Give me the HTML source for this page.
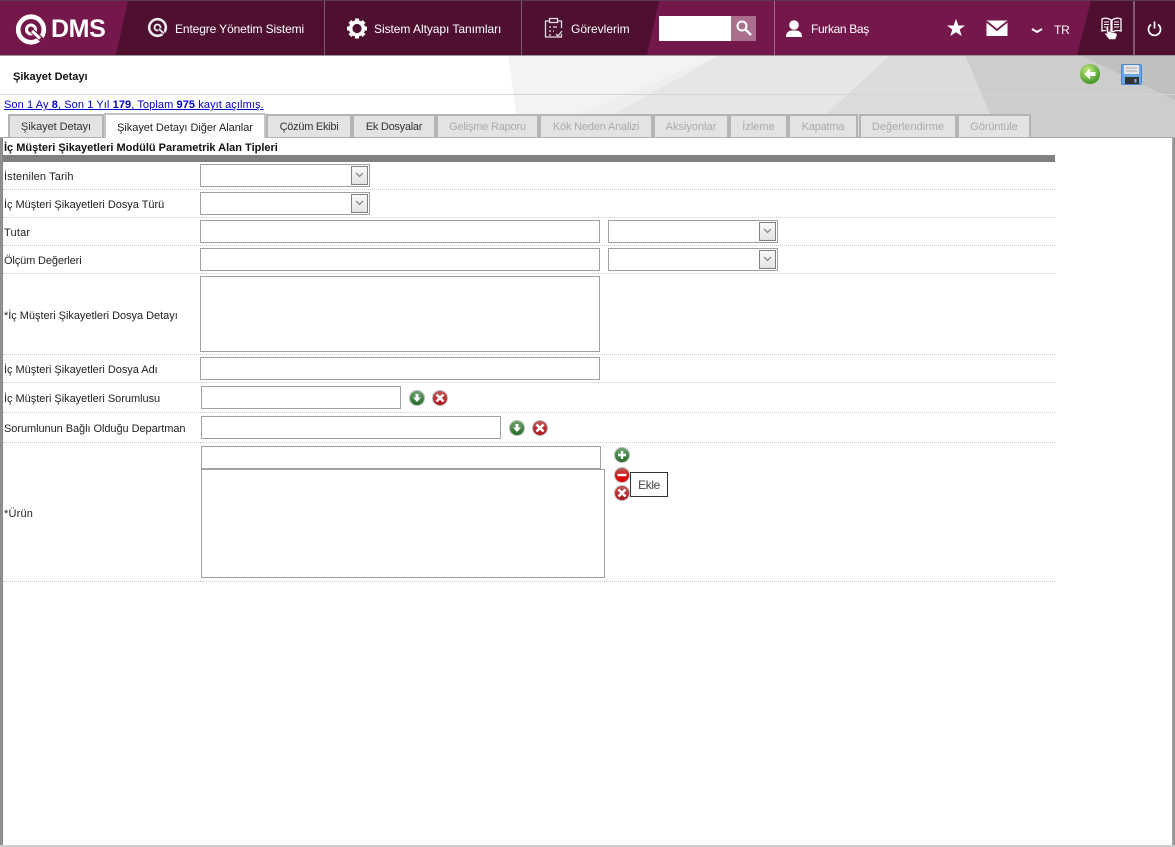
<!DOCTYPE html>
<html lang="tr"><head><meta charset="utf-8"><title>Şikayet Detayı</title>
<style>
html,body{margin:0;padding:0;background:#fff;}
body{width:1175px;height:847px;overflow:hidden;position:relative;font-family:"Liberation Sans",sans-serif;font-size:11px;color:#222;}
.a{position:absolute;}
.t{position:absolute;white-space:nowrap;line-height:14px;}
.h{color:#fff;font-size:12px;white-space:nowrap;position:absolute;line-height:16px;}
.tab{position:absolute;top:114px;height:21px;border:2px solid #b4b4b4;border-bottom:1px solid #b4b4b4;background:#e3e3e3;text-align:center;line-height:23px;color:#aaa;box-sizing:content-box;white-space:nowrap;font-size:11px;}
.tab.on{color:#333;}
.tab.act{background:#fff;color:#222;top:113px;height:24px;border-bottom:0;border-color:#c4c4c4;line-height:26px;}
.in{position:absolute;box-sizing:border-box;border:1px solid #a0a0a0;background:#fff;}
.dot{position:absolute;left:3px;width:1052px;height:0;border-top:1px dotted #ccc;}
.arrow{position:absolute;box-sizing:border-box;top:1px;right:1px;width:17px;height:19px;border:1px solid #808080;background:linear-gradient(#fafafa,#e2e2e2);}
.arrow svg{display:block;margin:5px 0 0 3px;}
</style></head><body>

<!-- page background -->
<svg class="a" style="left:0;top:55px" width="1175" height="83" viewBox="0 0 1175 83">
<rect width="1175" height="83" fill="#fff"/>
<polygon points="508,0 720,0 520,83" fill="#f3f3f3"/>
<polygon points="720,0 570,83 520,83" fill="#eeeeee"/>
<polygon points="720,0 890,0 800,83 570,83" fill="#e6e6e6"/>
<polygon points="890,0 965,0 1000,83 800,83" fill="#dcdcdc"/>
<polygon points="965,0 1175,0 1175,83 1000,83" fill="#cdcdcd"/>
<polygon points="1080,0 1175,45 1175,0" fill="#c0c0c0"/>
<rect y="39" width="1175" height="1" fill="#d4d4d4"/>
<rect y="0" width="1175" height="1" fill="#aaa"/>
<rect y="82" width="1175" height="1" fill="#aaa"/>
</svg>

<!-- header -->
<div class="a" style="left:0;top:0;width:1175px;height:55px;background:#74174a;"></div>
<div class="a" style="left:0;top:0;width:1175px;height:1px;background:#5a3a4c;"></div>
<svg class="a" style="left:0;top:0" width="1175" height="56" viewBox="0 0 1175 56">
<polygon points="128,1 659,1 647,55 116,55" fill="#4e0f31"/>
<polygon points="1091,1 1175,1 1175,55 1077,55" fill="#4e0f31"/>
<rect x="324" y="1" width="1" height="54" fill="#7d5a6d"/>
<rect x="521" y="1" width="1" height="54" fill="#7d5a6d"/>
<rect x="774" y="1" width="1" height="54" fill="#a06a88"/>
<rect x="1133" y="1" width="2" height="54" fill="#7d5a6d"/>
<rect y="55" width="1175" height="1" fill="#999"/>
<!-- logo Q -->
<circle cx="31" cy="29.500" r="12.800" fill="none" stroke="#fff" stroke-width="4.600"/>
<circle cx="31" cy="29.500" r="4.500" fill="none" stroke="#fff" stroke-width="3"/>
<path d="M32 31L42 40" stroke="#74174a" stroke-width="5" fill="none"/>
<path d="M32 31L40 38.500" stroke="#fff" stroke-width="3" fill="none"/>
<!-- Q icon nav -->
<circle cx="157.500" cy="27.500" r="8.300" fill="none" stroke="#eee" stroke-width="2.600"/>
<circle cx="157.500" cy="27.500" r="3" fill="none" stroke="#eee" stroke-width="1.800"/>
<path d="M159 29L165 34.500" stroke="#4e0f31" stroke-width="3" fill="none"/>
<path d="M159 29L164 33.500" stroke="#eee" stroke-width="1.800" fill="none"/>
<!-- gear -->
<g transform="translate(357,28.500)" fill="#fff">
<circle r="6.400" fill="none" stroke="#fff" stroke-width="3.600"/>
<rect x="-2" y="-10" width="4" height="4"/><rect x="-2" y="-10" width="4" height="4" transform="rotate(45)"/><rect x="-2" y="-10" width="4" height="4" transform="rotate(90)"/><rect x="-2" y="-10" width="4" height="4" transform="rotate(135)"/><rect x="-2" y="-10" width="4" height="4" transform="rotate(180)"/><rect x="-2" y="-10" width="4" height="4" transform="rotate(225)"/><rect x="-2" y="-10" width="4" height="4" transform="rotate(270)"/><rect x="-2" y="-10" width="4" height="4" transform="rotate(315)"/>
</g>
<!-- clipboard -->
<g fill="none" stroke="#ddd" stroke-width="1.300">
<path d="M550 21h-4.500v16h16v-3"/><path d="M557 21h4.500v7"/><rect x="549.500" y="18.500" width="8" height="4"/>
<path d="M549 27h2M549 31h2M549 35h2M553 27h4M553 31h1"/><path d="M556 34l2 2 4-5"/>
</g>
<!-- user -->
<g fill="#fff"><circle cx="794" cy="25" r="4.800"/><path d="M786 37c0-5 3-6 5-6.500h6c2 .5 5 1.500 5 6.500z"/></g>
<!-- star -->
<polygon points="956,19 958.400,25.500 965,25.500 959.700,29.500 961.700,36 956,32.200 950.300,36 952.300,29.500 947,25.500 953.600,25.500" fill="#fff"/>
<!-- mail -->
<rect x="986.500" y="20.500" width="21" height="15.500" fill="#fff"/>
<path d="M986.500 21.500L997 30L1007.500 21.500" fill="none" stroke="#74174a" stroke-width="1.800"/>
<!-- chevron -->
<path d="M1032 29l5 3 5-3" fill="none" stroke="#fff" stroke-width="2"/>
<!-- book + hand -->
<g fill="none" stroke="#fff" stroke-width="1.300">
<path d="M1102 19c3-1.500 6-1 9 1v12c-3-1.500-6-2-9-1z"/><path d="M1121 19c-3-1.500-6-1-9 1v12c3-1.500 6-2 9-1z"/>
<path d="M1104 22h5M1104 24.500h5M1104 27h5M1114 22h5M1114 24.500h5M1114 27h5" stroke-width="1"/>
</g>
<path d="M1106 27.500c0-2 2.500-2 2.500 0v4l5.500 1c2.500.5 3.500 1.500 3 3l-1.500 4h-6.500l-4.500-6c1-1 2-.5 2.500 0z" fill="#fff" stroke="#4e0f31" stroke-width=".6"/>
<!-- power -->
<path d="M1151 24.500a6 6 0 1 0 7 0" fill="none" stroke="#fff" stroke-width="1.700"/>
<path d="M1154.500 21.500v7" stroke="#fff" stroke-width="1.700"/>
</svg>
<div class="a" style="left:51px;top:13px;font:bold 25px/32px 'Liberation Sans',sans-serif;color:#fff;letter-spacing:-.4px;">DMS</div>
<div class="h" style="left:175px;top:21px;letter-spacing:-.12px;">Entegre Yönetim Sistemi</div>
<div class="h" style="left:374px;top:21px;letter-spacing:-.05px;">Sistem Altyapı Tanımları</div>
<div class="h" style="left:571px;top:21px;">Görevlerim</div>
<div class="a" style="left:659px;top:16px;width:72px;height:25px;background:#fff;"></div>
<div class="a" style="left:731px;top:16px;width:25px;height:25px;background:#a96f8d;"></div>
<svg class="a" style="left:731px;top:16px" width="25" height="25"><circle cx="11" cy="10" r="4.500" fill="none" stroke="#fff" stroke-width="2"/><path d="M14.500 13.500L20 19" stroke="#fff" stroke-width="2.400"/></svg>
<div class="h" style="left:811px;top:21px;letter-spacing:-.35px;">Furkan Baş</div>
<div class="h" style="left:1054px;top:22px;letter-spacing:-.2px;">TR</div>

<!-- title -->
<div class="t" style="left:13px;top:70px;font-weight:bold;color:#111;font-size:11px;">Şikayet Detayı</div>
<div class="t" style="left:4px;top:98px;color:#00c;text-decoration:underline;font-size:11px;letter-spacing:.09px;">Son 1 Ay <b>8</b>, Son 1 Yıl <b>179</b>, Toplam <b>975</b> kayıt açılmış.</div>

<!-- back icon -->
<svg class="a" style="left:1079px;top:63px" width="22" height="22" viewBox="0 0 22 22">
<defs><radialGradient id="gr" cx=".4" cy=".3" r=".8"><stop offset="0" stop-color="#c4ea7c"/><stop offset="1" stop-color="#2f8a1c"/></radialGradient></defs>
<circle cx="11" cy="11" r="10" fill="url(#gr)"/><path d="M11 5.500L5.500 11L11 16.500v-3.500h5.500V9H11z" fill="#fff"/></svg>
<!-- save icon -->
<svg class="a" style="left:1121px;top:64px" width="21" height="21" viewBox="0 0 21 21">
<rect x=".5" y=".5" width="20" height="20" rx="1.500" fill="#6aa6ea" stroke="#4b86cc"/>
<rect x="3" y="1" width="15" height="9" fill="#e6e6e6"/><path d="M5 4h11M5 7h11" stroke="#aaa"/>
<rect x="4" y="13" width="14" height="7" fill="#333"/><rect x="13.500" y="15" width="2" height="3.500" fill="#7fb2ea"/></svg>

<!-- tabs -->
<div class="tab on" style="left:8px;width:92px;letter-spacing:-.07px;">Şikayet Detayı</div>
<div class="tab on" style="left:266px;width:82px;letter-spacing:-.27px;">Çözüm Ekibi</div>
<div class="tab on" style="left:352px;width:80px;letter-spacing:-.27px;">Ek Dosyalar</div>
<div class="tab" style="left:436px;width:99px;letter-spacing:-.2px;">Gelişme Raporu</div>
<div class="tab" style="left:539px;width:110px;letter-spacing:-.18px;">Kök Neden Analizi</div>
<div class="tab" style="left:653px;width:72px;">Aksiyonlar</div>
<div class="tab" style="left:729px;width:55px;">İzleme</div>
<div class="tab" style="left:788px;width:66px;letter-spacing:-.2px;">Kapatma</div>
<div class="tab" style="left:859px;width:94px;">Değerlendirme</div>
<div class="tab" style="left:957px;width:70px;letter-spacing:-.1px;">Görüntüle</div>
<div class="tab act" style="left:104px;width:158px;letter-spacing:-.04px;">Şikayet Detayı Diğer Alanlar</div>

<!-- content bg and frame -->
<div class="a" style="left:0;top:138px;width:1175px;height:707px;background:#fff;"></div>
<div class="a" style="left:0;top:138px;width:3px;height:707px;background:linear-gradient(90deg,#888,#999 60%,#777);"></div>
<div class="a" style="left:1172px;top:138px;width:3px;height:707px;background:linear-gradient(90deg,#aaa,#888);"></div>
<div class="a" style="left:0;top:845px;width:1175px;height:2px;background:#ccc;"></div>

<div class="t" style="left:4px;top:141px;font-weight:bold;color:#111;font-size:11px;">İç Müşteri Şikayetleri Modülü Parametrik Alan Tipleri</div>
<div class="a" style="left:3px;top:155px;width:1052px;height:7px;background:#808080;"></div>

<!-- labels -->
<div class="t" style="left:4px;top:170px;letter-spacing:.13px;">İstenilen Tarih</div>
<div class="t" style="left:4px;top:198px;letter-spacing:-.03px;">İç Müşteri Şikayetleri Dosya Türü</div>
<div class="t" style="left:4px;top:226px;letter-spacing:.2px;">Tutar</div>
<div class="t" style="left:4px;top:254px;letter-spacing:-.13px;">Ölçüm Değerleri</div>
<div class="t" style="left:4px;top:309px;letter-spacing:-.03px;">*İç Müşteri Şikayetleri Dosya Detayı</div>
<div class="t" style="left:4px;top:363px;letter-spacing:-.03px;">İç Müşteri Şikayetleri Dosya Adı</div>
<div class="t" style="left:4px;top:392px;letter-spacing:-.03px;">İç Müşteri Şikayetleri Sorumlusu</div>
<div class="t" style="left:4px;top:422px;letter-spacing:-.06px;">Sorumlunun Bağlı Olduğu Departman</div>
<div class="t" style="left:4px;top:507px;letter-spacing:.2px;">*Ürün</div>

<!-- dotted separators -->
<div class="dot" style="top:189px"></div>
<div class="dot" style="top:217px"></div>
<div class="dot" style="top:245px"></div>
<div class="dot" style="top:273px"></div>
<div class="dot" style="top:354px"></div>
<div class="dot" style="top:382px"></div>
<div class="dot" style="top:412px"></div>
<div class="dot" style="top:442px"></div>
<div class="dot" style="top:581px"></div>

<!-- fields -->
<div class="in" style="left:200px;top:164px;width:170px;height:23px;"><div class="arrow"><svg width="9" height="7"><path d="M1 1l3.500 3.500L8 1" fill="none" stroke="#888" stroke-width="1.300"/></svg></div></div>
<div class="in" style="left:200px;top:192px;width:170px;height:23px;"><div class="arrow"><svg width="9" height="7"><path d="M1 1l3.500 3.500L8 1" fill="none" stroke="#888" stroke-width="1.300"/></svg></div></div>
<div class="in" style="left:200px;top:220px;width:400px;height:23px;"></div>
<div class="in" style="left:608px;top:220px;width:170px;height:23px;"><div class="arrow"><svg width="9" height="7"><path d="M1 1l3.500 3.500L8 1" fill="none" stroke="#888" stroke-width="1.300"/></svg></div></div>
<div class="in" style="left:200px;top:248px;width:400px;height:23px;"></div>
<div class="in" style="left:608px;top:248px;width:170px;height:23px;"><div class="arrow"><svg width="9" height="7"><path d="M1 1l3.500 3.500L8 1" fill="none" stroke="#888" stroke-width="1.300"/></svg></div></div>
<div class="in" style="left:200px;top:276px;width:400px;height:76px;"></div>
<div class="in" style="left:200px;top:357px;width:400px;height:23px;"></div>
<div class="in" style="left:201px;top:386px;width:200px;height:23px;"></div>
<div class="in" style="left:201px;top:416px;width:300px;height:23px;"></div>
<div class="in" style="left:201px;top:446px;width:400px;height:23px;"></div>
<div class="in" style="left:201px;top:469px;width:404px;height:109px;"></div>

<!-- action icons -->
<svg class="a" style="left:0;top:0;pointer-events:none" width="1175" height="847" viewBox="0 0 1175 847">
<defs>
<linearGradient id="ig" x1="0" y1="0" x2="0" y2="1"><stop offset="0" stop-color="#73a673"/><stop offset="1" stop-color="#1f6b24"/></linearGradient>
<linearGradient id="ir" x1="0" y1="0" x2="0" y2="1"><stop offset="0" stop-color="#c25a5a"/><stop offset="1" stop-color="#b00f14"/></linearGradient>
<linearGradient id="ir2" x1="0" y1="0" x2="0" y2="1"><stop offset="0" stop-color="#b86a6a"/><stop offset=".5" stop-color="#d01010"/><stop offset="1" stop-color="#e00000"/></linearGradient>
<g id="down"><circle r="7.500" fill="url(#ig)" stroke="#bbb"/><path d="M-1.500-4h3v3.500H4L0 4l-4-4.500h2.500z" fill="#fff"/></g>
<g id="x"><circle r="7.500" fill="url(#ir)" stroke="#bbb"/><path d="M-3.500-3.500L3.500 3.500M3.500-3.500L-3.500 3.500" stroke="#fff" stroke-width="2.600"/></g>
</defs>
<use href="#down" x="417" y="398"/><use href="#x" x="440" y="398"/>
<use href="#down" x="517" y="428"/><use href="#x" x="540" y="428"/>
<circle cx="622" cy="455" r="7.500" fill="url(#ig)" stroke="#bbb"/><path d="M618 455h8M622 451v8" stroke="#fff" stroke-width="2.400"/>
<circle cx="622" cy="475" r="7.500" fill="url(#ir2)" stroke="#bbb"/><path d="M617.500 475h9" stroke="#fff" stroke-width="2.400"/>
<use href="#x" x="622" y="493"/>
</svg>

<!-- tooltip -->
<div class="a" style="left:630px;top:472px;width:38px;height:25px;box-sizing:border-box;border:1px solid #333;background:#fff;text-align:center;line-height:24px;font-size:12px;color:#444;letter-spacing:-.4px;">Ekle</div>

</body></html>
